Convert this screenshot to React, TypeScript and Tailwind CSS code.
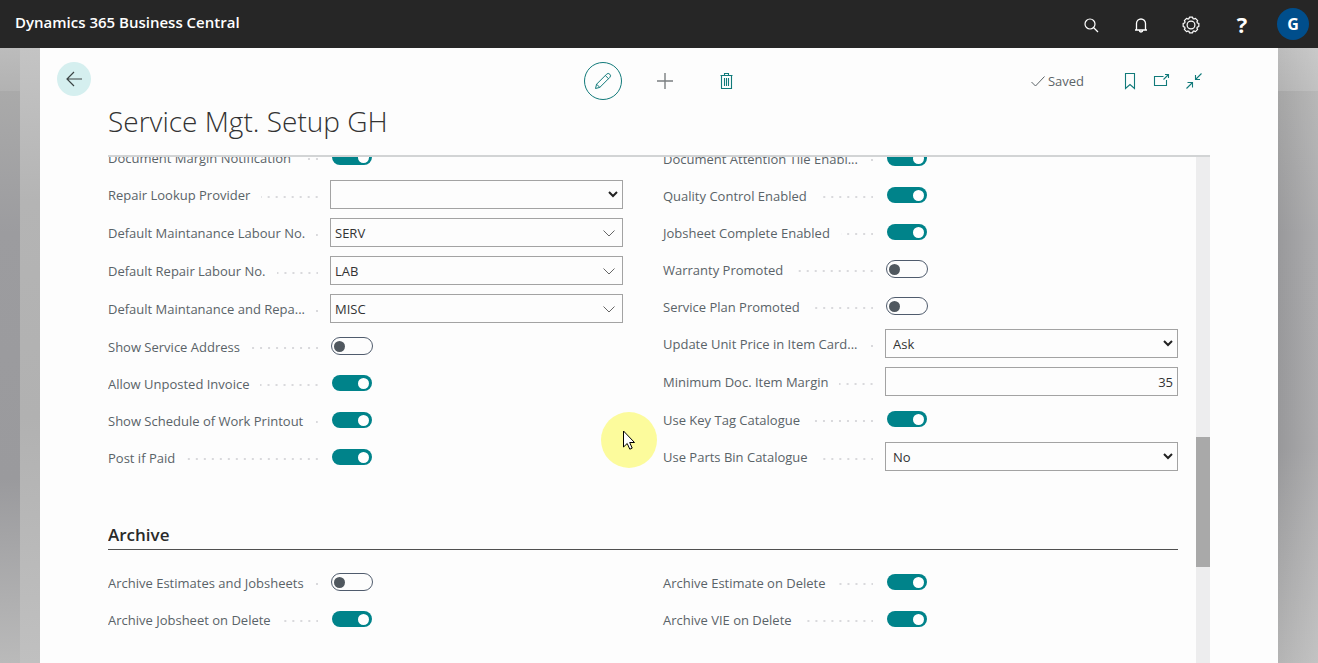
import React, { useId } from 'react';

const Stroke = ({
  size,
  width = 1,
  className = '',
  children,
}: {
  size: number;
  width?: number;
  className?: string;
  children: React.ReactNode;
}) => (
  <svg
    width={size}
    height={size}
    viewBox={`0 0 ${size} ${size}`}
    fill="none"
    stroke="currentColor"
    strokeWidth={width}
    className={className}
    aria-hidden="true"
  >
    {children}
  </svg>
);

const gearPath = (() => {
  const points: string[] = [];
  const teeth = 8;
  for (let i = 0; i < teeth; i++) {
    const a = (i / teeth) * Math.PI * 2;
    [
      [-0.2, 8],
      [0.2, 8],
      [0.3, 6.7],
      [0.48, 6.7],
    ].forEach(([d, r]) => {
      points.push(`${(9 + Math.sin(a + d) * r).toFixed(2)} ${(9 - Math.cos(a + d) * r).toFixed(2)}`);
    });
  }
  return `M${points.join('L')}Z`;
})();

function HeaderButton({ label, children }: { label: string; children: React.ReactNode }) {
  return (
    <button type="button" aria-label={label} className="flex h-12 min-w-[50px] items-center justify-center">
      {children}
    </button>
  );
}

function Header() {
  return (
    <header className="flex h-12 items-center justify-between bg-[#262626] text-white">
      <a href="#" className="pb-1 pl-[15px] text-[15px] leading-5 font-semibold">
        Dynamics 365 Business Central
      </a>
      <div className="flex">
        <HeaderButton label="Search">
          <Stroke size={16} width={1.2} className="mt-0.5">
            <circle cx="7" cy="7" r="5" />
            <path d="M10.5 10.5L15 15" />
          </Stroke>
        </HeaderButton>
        <HeaderButton label="Notifications">
          <Stroke size={16} width={1.3} className="mt-0.5">
            <path d="M2 13H14M3.5 13V6.5A4.5 4.5 0 0 1 12.5 6.5V13M6.3 13.3A1.7 1.7 0 0 0 9.7 13.3" />
          </Stroke>
        </HeaderButton>
        <HeaderButton label="Settings">
          <Stroke size={18} width={1.2} className="mt-0.5">
            <path d={gearPath} strokeLinejoin="round" />
            <circle cx="9" cy="9" r="3.9" />
          </Stroke>
        </HeaderButton>
        <HeaderButton label="Help">
          <span className="w-[52px] text-center text-[22px] leading-6 font-bold">?</span>
        </HeaderButton>
        <HeaderButton label="Account">
          <span className="flex size-8 items-center justify-center rounded-full bg-[#004e8c] text-base font-bold">G</span>
        </HeaderButton>
      </div>
    </header>
  );
}

function Toolbar() {
  return (
    <div className="grid grid-cols-[1fr_auto_1fr] items-center pt-[14px] pr-[5px] pl-[17px]">
      <button
        type="button"
        aria-label="Back"
        className="mb-1 flex size-[34px] items-center justify-center rounded-full bg-[#d5efef] text-[#3c4444]"
      >
        <Stroke size={16} width={1.2}>
          <path d="M16 8H1M8 1L1 8L8 15" />
        </Stroke>
      </button>
      <div className="flex items-center">
        <div className="flex w-[62px] justify-center">
          <button
            type="button"
            aria-label="Edit"
            className="flex size-[38px] items-center justify-center rounded-full border border-[#117a7a] text-[#117a7a]"
          >
            <Stroke size={18}>
              <path d="M1.5 16.5L2.6 12.2L12.6 2.2A2 2 0 0 1 15.8 5.4L5.8 15.4ZM2.6 12.2L5.8 15.4M11.3 3.5L14.5 6.7" />
            </Stroke>
          </button>
        </div>
        <button type="button" aria-label="New" className="flex h-[38px] w-[62px] items-center justify-center text-[#7a7e80]">
          <Stroke size={16} width={1.4}>
            <path d="M8 0V16M0 8H16" />
          </Stroke>
        </button>
        <button type="button" aria-label="Delete" className="flex h-[38px] w-[62px] items-center justify-center text-[#117a7a]">
          <Stroke size={18} width={1.1}>
            <path d="M2.5 3.5H14.5M3.5 3.5V16.5H13.5V3.5M6.5 3.5V1.5H10.5V3.5M6.5 6V14M8.5 6V14M10.5 6V14" />
          </Stroke>
        </button>
      </div>
      <div className="flex items-center justify-end pr-[63px] text-[#117a7a]">
        <span className="mr-[30px] flex items-center gap-[3px] text-[13px] leading-5 text-[#5c6468]">
          <Stroke size={14}>
            <path d="M0.5 8L4.5 12L13.5 2.5" />
          </Stroke>
          Saved
        </span>
        <button type="button" aria-label="Bookmark" className="flex size-8 items-center justify-center">
          <Stroke size={18} width={1.1}>
            <path d="M4.5 1.5H13.5V16.5L9 12.5L4.5 16.5Z" />
          </Stroke>
        </button>
        <button type="button" aria-label="Open in new window" className="flex size-8 items-center justify-center">
          <Stroke size={18} width={1.1}>
            <path d="M10.5 4.5H1.5V13.5H13.5V8M10.5 7.5L15.5 2.5M12 2.5H15.5V6" />
          </Stroke>
        </button>
        <button type="button" aria-label="Collapse" className="flex size-8 items-center justify-center">
          <Stroke size={18} width={1.1}>
            <path d="M16.5 1.5L10.5 7.5M10.5 3V7.5H15M1.5 16.5L7.5 10.5M2.5 10.5H7.5V15.5" />
          </Stroke>
        </button>
      </div>
    </div>
  );
}

type Field = {
  label: string;
  kind: 'toggle' | 'select' | 'lookup' | 'number';
  on?: boolean;
  value?: string;
};

const box =
  'h-[29px] w-full appearance-none rounded-none border border-[#a3a3a3] bg-[#fdfdfd] text-[13px] leading-5 text-[#333333] outline-none';

function Control({ field, id }: { field: Field; id: string }) {
  if (field.kind === 'toggle') {
    return (
      <input
        id={id}
        type="checkbox"
        role="switch"
        defaultChecked={field.on}
        className="ml-px flex h-[18px] w-[42px] appearance-none items-center rounded-full border border-[#505c6d] bg-clip-padding pr-[3px] pl-[2px] before:size-[11px] before:rounded-full before:bg-[#50585f] checked:justify-end checked:border-transparent checked:bg-[#00838a] checked:before:bg-white"
      />
    );
  }
  if (field.kind === 'select') {
    return (
      <div className="relative flex-1">
        <select id={id} defaultValue={field.value} className={`${box} px-[7px]`}>
          <option>{field.value}</option>
        </select>
        <Stroke size={10} width={2} className="pointer-events-none absolute top-[9px] right-[5px] text-[#222222]">
          <path d="M1 3L5 7L9 3" />
        </Stroke>
      </div>
    );
  }
  if (field.kind === 'lookup') {
    return (
      <div className="relative flex-1">
        <input id={id} type="text" defaultValue={field.value} className={`${box} pr-7 pl-1`} />
        <button
          type="button"
          aria-label={`Choose a value for ${field.label}`}
          className="absolute top-0 right-0 flex h-full w-7 items-center justify-center text-[#666666]"
        >
          <Stroke size={12}>
            <path d="M0.5 3.5L6 9L11.5 3.5" />
          </Stroke>
        </button>
      </div>
    );
  }
  return (
    <div className="flex-1">
      <input id={id} type="text" inputMode="numeric" defaultValue={field.value} className={`${box} px-1 text-right`} />
    </div>
  );
}

function Row({ field }: { field: Field }) {
  const id = useId();
  return (
    <div className="flex min-h-7 items-center">
      <div className="flex w-[222px] shrink-0 items-center gap-[11px] pr-3">
        <label htmlFor={id} className="shrink-0 pt-px text-[13px] leading-5 whitespace-nowrap text-[#5a6368]">
          {field.label}
        </label>
        <span className="mt-1 h-0.5 flex-1 bg-[linear-gradient(to_left,#d9d9dc_2px,transparent_2px)] bg-[length:8px_2px] bg-right bg-repeat-x" />
      </div>
      <Control field={field} id={id} />
    </div>
  );
}

function Columns({ left, right }: { left: Field[]; right: Field[] }) {
  return (
    <div className="grid grid-cols-2 items-end gap-10">
      {[left, right].map((fields, i) => (
        <div key={i} className="flex flex-col gap-[9px]">
          {fields.map((f) => (
            <Row key={f.label} field={f} />
          ))}
        </div>
      ))}
    </div>
  );
}

const generalLeft: Field[] = [
  { label: 'Document Margin Notification', kind: 'toggle', on: true },
  { label: 'Repair Lookup Provider', kind: 'select', value: '' },
  { label: 'Default Maintanance Labour No.', kind: 'lookup', value: 'SERV' },
  { label: 'Default Repair Labour No.', kind: 'lookup', value: 'LAB' },
  { label: 'Default Maintanance and Repa...', kind: 'lookup', value: 'MISC' },
  { label: 'Show Service Address', kind: 'toggle' },
  { label: 'Allow Unposted Invoice', kind: 'toggle', on: true },
  { label: 'Show Schedule of Work Printout', kind: 'toggle', on: true },
  { label: 'Post if Paid', kind: 'toggle', on: true },
];

const generalRight: Field[] = [
  { label: 'Document Attention Tile Enabl...', kind: 'toggle', on: true },
  { label: 'Quality Control Enabled', kind: 'toggle', on: true },
  { label: 'Jobsheet Complete Enabled', kind: 'toggle', on: true },
  { label: 'Warranty Promoted', kind: 'toggle' },
  { label: 'Service Plan Promoted', kind: 'toggle' },
  { label: 'Update Unit Price in Item Card...', kind: 'select', value: 'Ask' },
  { label: 'Minimum Doc. Item Margin', kind: 'number', value: '35' },
  { label: 'Use Key Tag Catalogue', kind: 'toggle', on: true },
  { label: 'Use Parts Bin Catalogue', kind: 'select', value: 'No' },
];

const archiveLeft: Field[] = [
  { label: 'Archive Estimates and Jobsheets', kind: 'toggle' },
  { label: 'Archive Jobsheet on Delete', kind: 'toggle', on: true },
];

const archiveRight: Field[] = [
  { label: 'Archive Estimate on Delete', kind: 'toggle', on: true },
  { label: 'Archive VIE on Delete', kind: 'toggle', on: true },
];

export default function App() {
  return (
    <div className="relative flex h-screen flex-col overflow-hidden bg-[#a6a6a8] font-['Open_Sans','Noto_Sans',sans-serif]">
      <Header />
      <div className="flex min-h-0 flex-1">
        <div className="w-5 shrink-0 bg-[linear-gradient(to_bottom,#bcbcbc_0%,#b2b2b2_7%,#aaaaaa_7%,#9c9c9f_30%,#9a9a9d_70%,#bababa_100%)]" />
        <div className="w-5 shrink-0 bg-[linear-gradient(to_bottom,#c4c4c4_0%,#b4b4b4_25%,#b1b1b1_60%,#c0c0c0_100%)]" />
        <main className="flex min-w-0 flex-1 flex-col bg-[#fdfdfd]">
          <Toolbar />
          <h1 className="pt-[3px] pl-[68px] text-[28px] leading-9 font-light text-[#333333]">Service Mgt. Setup GH</h1>
          <div className="mx-[68px] mt-4 flex min-h-0 flex-1 border-t-2 border-[#d2d4d5]">
            <div className="min-w-0 flex-1 overflow-hidden pr-[18px]">
              <div className="-mt-[14px]">
                <Columns left={generalLeft} right={generalRight} />
              </div>
              <h2 className="mt-[52px] mb-[18px] border-b border-[#505050] pb-0.5 text-[17px] leading-6 font-semibold text-[#2a2a2a]">
                Archive
              </h2>
              <Columns left={archiveLeft} right={archiveRight} />
            </div>
            <div className="flex w-[14px] flex-col bg-[#ededee] pt-[280px]">
              <div className="h-[130px] bg-[#a9a9a9]" />
            </div>
          </div>
        </main>
        <div className="w-10 shrink-0 bg-[linear-gradient(to_right,transparent,rgba(255,255,255,0.2)),linear-gradient(to_bottom,#bcbcbc_0%,#b2b2b2_7%,#a6a6a6_7%,#99999b_30%,#98989a_65%,#b4b4b4_100%)]" />
      </div>
      <div className="pointer-events-none absolute top-[412px] left-[601px] size-14 rounded-full bg-[#fcfb9c]">
        <svg width="12" height="20" viewBox="0 0 12 20" className="absolute top-[18px] left-[22px]" aria-hidden="true">
          <path
            d="M0.5 1V17L4.2 13.5L6.8 19.2L9.2 18.1L6.7 12.5H11.5Z"
            fill="white"
            stroke="black"
            strokeWidth="1"
          />
        </svg>
      </div>
    </div>
  );
}
